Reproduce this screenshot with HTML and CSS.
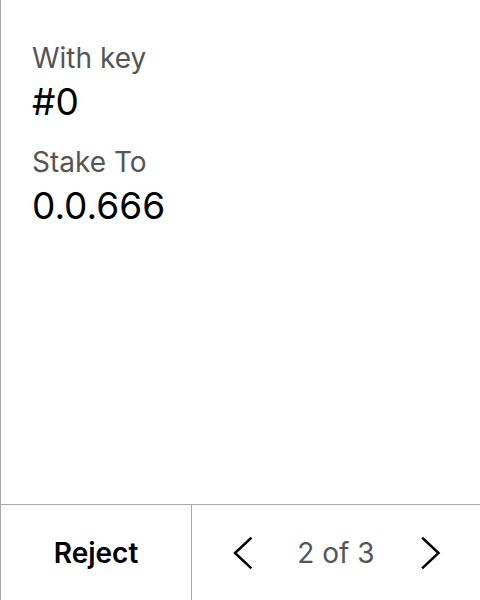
FILE: index.html
```html
<!DOCTYPE html>
<html>
<head>
<meta charset="utf-8">
<link rel="stylesheet" href="styles.css">
</head>
<body>
<div class="screen">
  <div class="content">
    <div class="field">
      <div class="label">With key</div>
      <div class="value">#0</div>
    </div>
    <div class="field">
      <div class="label">Stake To</div>
      <div class="value">0.0.666</div>
    </div>
  </div>
  <div class="footer">
    <div class="reject">Reject</div>
    <div class="pager">
      <svg class="chev" width="20" height="32" viewBox="0 0 20 32"><path d="M19.5 1.5 L4 16 L19.5 30.5" fill="none" stroke="#000" stroke-width="2.5" stroke-linecap="square"/></svg>
      <span class="count">2 of 3</span>
      <svg class="chev" width="20" height="32" viewBox="0 0 20 32"><path d="M2 1.5 L17.5 16 L2 30.5" fill="none" stroke="#000" stroke-width="2.5" stroke-linecap="square"/></svg>
    </div>
  </div>
</div>
</body>
</html>
```
FILE: styles.css
```css
html, body {
  margin: 0;
  padding: 0;
  background: #fff;
}
body {
  font-family: Inter, "Noto Sans", sans-serif;
  color: #000;
}
.screen {
  width: 479px;
  height: 600px;
  border-left: 1px solid #aaaaaa;
  display: flex;
  flex-direction: column;
}
.content {
  flex: 1;
  padding: 41px 31px 0;
  display: flex;
  flex-direction: column;
  gap: 21px;
}
.label {
  font-size: 28px;
  line-height: 34px;
  color: #555;
}
.value {
  font-size: 37px;
  line-height: 44px;
  margin-top: 5px;
  color: #000;
}
.footer {
  height: 95px;
  border-top: 1px solid #aaaaaa;
  display: grid;
  grid-template-columns: 191px 1fr;
}
.reject {
  display: flex;
  align-items: center;
  justify-content: center;
  font-size: 28px;
  font-weight: 600;
  border-right: 1px solid #aaaaaa;
}
.pager {
  display: flex;
  align-items: center;
  justify-content: center;
  gap: 46px;
}
.count {
  font-size: 28px;
  color: #555;
}
.chev {
  display: block;
  overflow: visible;
}
```
